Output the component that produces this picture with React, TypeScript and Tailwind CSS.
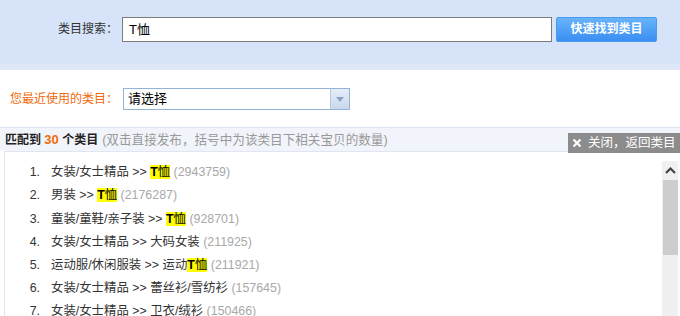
import React from 'react';

const font = { fontFamily: '"Liberation Sans", "Noto Sans CJK SC", sans-serif' };

const items: { path: string; pre?: string; count: string }[] = [
    { path: '女装/女士精品 >> ', pre: '', count: '2943759' },
    { path: '男装 >> ', pre: '', count: '2176287' },
    { path: '童装/童鞋/亲子装 >> ', pre: '', count: '928701' },
    { path: '女装/女士精品 >> 大码女装', count: '211925' },
    { path: '运动服/休闲服装 >> ', pre: '运动', count: '211921' },
    { path: '女装/女士精品 >> 蕾丝衫/雪纺衫', count: '157645' },
    { path: '女装/女士精品 >> 卫衣/绒衫', count: '150466' },
];

const App: React.FC = () => {
    return (
        <div className="w-[680px] h-[316px] overflow-hidden bg-white text-[12px] text-[#333]" style={font}>
            {/* Search bar */}
            <div className="h-[70px] bg-[#d6e3f8] border-b-[6px] border-[#dfe8f8] flex items-start pt-[17px]">
                <span className="w-[122px] pr-[4px] text-right leading-[25px] text-[#333]">类目搜索：</span>
                <div className="w-[430px] h-[25px] bg-white border border-[#7b7b7b] px-[6px] leading-[23px] text-[13px] text-black">T恤</div>
                <button className="ml-[4px] w-[101px] h-[25px] rounded-[2px] bg-gradient-to-b from-[#68b3fa] to-[#3a8ef2] border border-[#4a9af0] text-white font-bold text-[12px] leading-[23px]">
                    快速找到类目
                </button>
            </div>

            {/* Recent */}
            <div className="h-[57px] flex items-start pt-[18px]">
                <span className="w-[123px] pl-[10px] leading-[22px] text-[#f06a0a]">您最近使用的类目：</span>
                <div className="w-[227px] h-[22px] border border-[#93b3d6] flex">
                    <span className="flex-1 px-[4px] leading-[20px] text-[13px] text-black">请选择</span>
                    <div className="w-[19px] h-full bg-gradient-to-b from-[#e6eef8] to-[#c9d8ea] border-l border-[#b5c9e0] flex items-center justify-center">
                        <svg width="8" height="5" viewBox="0 0 8 5"><path d="M0 0h8L4 5z" fill="#8aa4c4" /></svg>
                    </div>
                </div>
            </div>

            {/* Result header */}
            <div className="h-[24px] bg-[#f1f4fa] border-t border-[#dde5f2] flex items-center justify-between pl-[5px]">
                <div className="leading-[22px]">
                    <span className="font-bold text-[#222]">匹配到 </span>
                    <span className="font-bold text-[#f06a0a] text-[13px]">30</span>
                    <span className="font-bold text-[#222]"> 个类目</span>
                    <span className="text-[#999] text-[12.6px] ml-[4px]">(双击直接发布，括号中为该类目下相关宝贝的数量)</span>
                </div>
                <div className="h-[20px] w-[112px] bg-[#8c8c8c] text-white flex items-center pl-[4px] gap-[6px] self-end mb-[-2px]">
                    <svg width="10" height="10" viewBox="0 0 10 10"><path d="M1.5 1.5l7 7M8.5 1.5l-7 7" stroke="#fff" strokeWidth="2.2" /></svg>
                    <span className="text-[12.5px]">关闭，返回类目</span>
                </div>
            </div>

            {/* List */}
            <div className="ml-[4px] h-[166px] border-l border-t border-[#dfe6f1] flex">
                <ul className="flex-1 pt-[9px]">
                    {items.map((it, i) => (
                        <li key={i} className="h-[23.2px] flex items-center text-[12.4px] text-[#333]">
                            <span className="w-[35px] text-right">{i + 1}.</span>
                            <span className="ml-[11px] whitespace-pre">
                                {it.path}
                                {it.pre !== undefined && (
                                    <>
                                        {it.pre}
                                        <span className="bg-[#ffff00] text-black"><b>T</b>恤</span>
                                    </>
                                )}
                                <span className="text-[#a8a8a8]"> ({it.count})</span>
                            </span>
                        </li>
                    ))}
                </ul>
                <div className="w-[16px] mr-[2px] mt-[9px] bg-[#f0f0f0] flex flex-col items-center">
                    <div className="h-[19px] flex items-center justify-center">
                        <svg width="11" height="7" viewBox="0 0 11 7"><path d="M1 6L5.5 1.5 10 6" stroke="#444" strokeWidth="2.2" fill="none" /></svg>
                    </div>
                    <div className="w-[15px] h-[75px] bg-[#cdcdcd]" />
                </div>
            </div>
        </div>
    );
};

export default App;
